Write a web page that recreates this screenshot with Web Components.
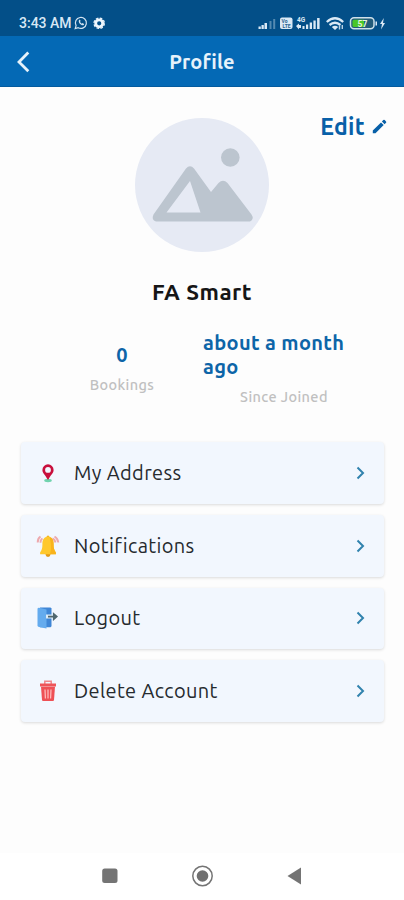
<!DOCTYPE html>
<html lang="en">
<head>
<meta charset="utf-8">
<meta name="viewport" content="width=device-width, initial-scale=1">
<title>Profile</title>
<style>
  body {
    margin: 0;
    background: #fdfdfd;
    font-family: Ubuntu, "Noto Sans", sans-serif;
  }
</style>
</head>
<body>
<profile-page></profile-page>

<script>
class StatusBar extends HTMLElement {
  constructor() {
    super();
    this.attachShadow({ mode: "open" });
  }

  connectedCallback() {
    this.shadowRoot.innerHTML = `
      <style>
        :host {
          display: flex;
          box-sizing: border-box;
          height: 36px;
          padding: 10px 17px 0 19px;
          background: #034f88;
          color: #d9e8f5;
          font: 500 14px/27px Roboto, sans-serif;
        }
        .time { width: 54px; white-space: nowrap; }
        svg { display: block; height: 26px; }
        .spacer { flex: 1; }
      </style>
      <span class="time">3:43 AM</span>
      <svg width="34" height="26" viewBox="0 0 34 26" fill="none" stroke="#d3e4f2">
        <path d="M2.2 18.6l.9-3a5.5 5.5 0 1 1 2.1 2.1z" stroke-width="1.2"/>
        <path d="M5.8 10.5c-.5 2.6 2.6 5.6 5 4.6l.3-1.2-1.6-.8-.8.6-1.7-1.8.6-.8-.7-1.5z" fill="#d3e4f2" stroke="none"/>
        <circle cx="26.2" cy="13.3" r="3.5" stroke="#eef6fc" stroke-width="2.8"/>
        <circle cx="26.2" cy="13.3" r="5.2" stroke="#eef6fc" stroke-width="1.2" stroke-dasharray="2.6 1.48"/>
      </svg>
      <span class="spacer"></span>
      <svg width="129" height="26" viewBox="0 0 129 26" fill="#dbe9f5">
        <path d="M.5 16.500h2.300V19H.5zM3.500 15h2.300v4H3.500zM6.500 13h2.500v6H6.500z"/>
        <path d="M11.500 11h2v8h-2zM15.200 9h2v10h-2z" opacity=".38"/>
        <rect x="22" y="7.500" width="12.500" height="11.500" rx="2"/>
        <g font-family="Roboto, sans-serif" font-weight="700">
          <text x="23.600" y="12.800" font-size="5" fill="#296491">Vo</text>
          <text x="24.500" y="17.800" font-size="5" fill="#296491">LTE</text>
          <text x="39" y="12" font-size="6.500">4G</text>
        </g>
        <path d="M38 16l3-2.500v1.500h2v3h-2v1.500zM44.500 16h2v3h-2zM48 14.500h2.200V19H48zM51.700 12.500h2.300V19h-2.300zM55.400 10.500h2.300V19h-2.300zM59.100 8h2.500v11h-2.500z"/>
        <path d="M68.800 12q8.200-7.500 16.400 0M71.500 15q5.500-4.500 11 0" fill="none" stroke="#dbe9f5" stroke-width="2.300"/>
        <path d="M73.800 17q3.200-2.500 6.400 0L77 20z"/>
        <path d="M81.500 19.500v-4M84.300 15v4" stroke="#b8d1e4" stroke-width="1.400"/>
        <rect x="92.500" y="7.800" width="23.500" height="11" rx="3.500" fill="#235b7a" stroke="#cfe1ea" stroke-width="1.500"/>
        <path d="M96 9.700h10v7.200H96a1.500 1.500 0 0 1-1.500-1.500v-4.200A1.500 1.500 0 0 1 96 9.700z" fill="#49c728"/>
        <text x="99.500" y="16.500" font-family="Roboto, sans-serif" font-weight="700" font-size="8.500" fill="#e5f3dd">57</text>
        <path d="M117.500 11.500h1.500v4h-1.500zM125.800 8l-3.800 6h2l-1 5.500 4-6.500h-2z"/>
      </svg>
    `;
  }
}

class AppHeader extends HTMLElement {
  constructor() {
    super();
    this.attachShadow({ mode: "open" });
  }

  connectedCallback() {
    this.shadowRoot.innerHTML = `
      <style>
        :host {
          display: grid;
          grid-template-columns: 1fr auto 1fr;
          align-items: center;
          box-sizing: border-box;
          height: 51px;
          padding: 1px 16px 0;
          background: #0469b5;
          border-bottom: 1px solid #045b9e;
          color: #e6f2fb;
        }
        h1 { margin: 0; font-size: 20px; line-height: 28px; font-weight: 600; letter-spacing: 0.15px; }
        svg { display: block; }
      </style>
      <svg width="14" height="22" viewBox="0 0 14 22" fill="none" stroke="#e6f2fb" stroke-width="2.8">
        <path d="M12.300 1.500L3 11l9.300 9.300"/>
      </svg>
      <h1><slot></slot></h1>
    `;
  }
}

class ProfileCard extends HTMLElement {
  constructor() {
    super();
    this.attachShadow({ mode: "open" });
  }

  connectedCallback() {
    this.shadowRoot.innerHTML = `
      <style>
        :host { display: block; padding-top: 31px; }
        .top {
          display: grid;
          grid-template-columns: 1fr 134px 1fr;
          align-items: start;
        }
        .avatar { grid-column: 2; display: block; }
        .edit {
          display: flex;
          justify-content: flex-end;
          align-items: center;
          gap: 7px;
          height: 16px;
          padding-right: 17px;
          color: #0860a8;
          font-size: 23px;
          font-weight: 600;
          letter-spacing: 0.3px;
        }
        h2 {
          margin: 24px 0 0;
          text-align: center;
          font-size: 22.5px;
          line-height: 32px;
          font-weight: 600;
          letter-spacing: 0.5px;
          color: #161616;
        }
      </style>
      <div class="top">
        <svg class="avatar" width="134" height="134" viewBox="0 0 134 134">
          <circle cx="67" cy="67" r="67" fill="#e6eaf4"/>
          <g fill="#bcc5cf">
            <circle cx="95.300" cy="39.500" r="9.300"/>
            <path fill-rule="evenodd" d="M51 50.500Q55 46 59 50.500L76 74L83.500 65Q88 60.500 92.500 65L116.500 96.500Q119.500 101 115 103.500H21Q16 102 18.500 96.500ZM55 63L31.500 94.500H65.500Z"/>
          </g>
        </svg>
        <div class="edit">
          <span>Edit</span>
          <svg width="15" height="15" viewBox="0 0 15 15" fill="#0860a8">
            <path d="M.8 11.600L9 3.400l2.700 2.700-8.200 8.200H.8zM9.900 2.500l1.400-1.400q.7-.7 1.400 0l1.300 1.300q.7.700 0 1.400l-1.400 1.400z"/>
          </svg>
        </div>
      </div>
      <h2><slot></slot></h2>
    `;
  }
}

class ProfileStat extends HTMLElement {
  constructor() {
    super();
    this.attachShadow({ mode: "open" });
  }

  connectedCallback() {
    this.shadowRoot.innerHTML = `
      <style>
        :host { display: flex; flex-direction: column; align-items: center; gap: 8px; }
        .value { font-size: 20px; line-height: 24px; font-weight: 600; color: #0d65a8; letter-spacing: 0.35px; }
        .label { font-size: 14.5px; line-height: 20px; font-weight: 500; color: #c0c0c0; letter-spacing: 0.4px; }
      </style>
      <div class="value"><slot></slot></div>
      <div class="label">${this.getAttribute("label") || ""}</div>
    `;
  }
}

class MenuItem extends HTMLElement {
  constructor() {
    super();
    this.attachShadow({ mode: "open" });
  }

  connectedCallback() {
    this.shadowRoot.innerHTML = `
      <style>
        :host {
          display: flex;
          align-items: center;
          box-sizing: border-box;
          height: 61.7px;
          padding: 0 19px 0 15px;
          border-radius: 4px;
          background: #f2f7fe;
          box-shadow: 0 1px 3px rgba(0, 0, 0, 0.14);
          color: #262a2e;
        }
        .label {
          flex: 1;
          margin-left: 14px;
          font-size: 20px;
          line-height: 28px;
          letter-spacing: 0.36px;
          white-space: nowrap;
        }
        .chevron { display: block; }
        ::slotted(svg) { display: block; flex: none; }
      </style>
      <slot name="icon"></slot>
      <span class="label"><slot></slot></span>
      <svg class="chevron" width="9" height="14" viewBox="0 0 9 14" fill="none" stroke="#3183ae" stroke-width="2">
        <path d="M1.500 1.500L7 7l-5.500 5.500"/>
      </svg>
    `;
  }
}

class NavBar extends HTMLElement {
  constructor() {
    super();
    this.attachShadow({ mode: "open" });
  }

  connectedCallback() {
    this.shadowRoot.innerHTML = `
      <style>
        :host {
          display: flex;
          justify-content: space-between;
          align-items: center;
          box-sizing: border-box;
          height: 47px;
          padding: 0 102px 1px 101px;
          background: #fff;
        }
      </style>
      <svg width="18" height="22" viewBox="0 0 18 22"><rect x="1.200" y="3.500" width="15.300" height="14.500" rx="2.500" fill="#747474"/></svg>
      <svg width="22" height="22" viewBox="0 0 22 22">
        <circle cx="10.500" cy="11" r="9.700" fill="none" stroke="#747474" stroke-width="1.500"/>
        <circle cx="10.500" cy="11" r="5.800" fill="#707070"/>
      </svg>
      <svg width="16" height="22" viewBox="0 0 16 22"><path d="M15 2.500v17L1.500 11z" fill="#747474"/></svg>
    `;
  }
}

class ProfilePage extends HTMLElement {
  constructor() {
    super();
    this.attachShadow({ mode: "open" });
  }

  connectedCallback() {
    this.shadowRoot.innerHTML = `
      <style>
        :host { display: flex; flex-direction: column; height: 900px; }
        main { flex: 1; }
        .stats {
          display: grid;
          grid-template-columns: 162px 162px;
          align-items: center;
          margin: 23px 0 0 41px;
        }
        .menu { display: flex; flex-direction: column; gap: 11px; margin: 35.2px 20px 0 21px; }
      </style>
      <status-bar></status-bar>
      <app-header>Profile</app-header>
      <main>
        <profile-card>FA Smart</profile-card>
        <div class="stats">
          <profile-stat label="Bookings">0</profile-stat>
          <profile-stat label="Since Joined">about a month ago</profile-stat>
        </div>
        <div class="menu">
          <menu-item>
            <svg slot="icon" width="24" height="24" viewBox="0 0 24 24">
              <ellipse cx="12" cy="19.500" rx="3.800" ry="1.700" fill="#70d3ae"/>
              <path fill="#c80f3c" fill-rule="evenodd" d="M12 3.300a5.600 5.600 0 0 1 5.600 5.600c0 3.200-3 4.600-5.200 9.600h-.8c-2.200-5-5.200-6.400-5.200-9.600A5.600 5.600 0 0 1 12 3.300zm0 2.700a2.900 2.900 0 1 0 0 5.800 2.900 2.900 0 0 0 0-5.800z"/>
            </svg>
            My Address
          </menu-item>
          <menu-item>
            <svg slot="icon" width="24" height="24" viewBox="0 0 24 24">
              <g fill="none" stroke="#eda9ad" stroke-width="1.900">
                <path d="M4.500 2.500Q1.500 4.500 1.700 8.500M6.500 4.500Q4.500 5.500 4.500 8.800M18.500 2.500q3.500 2 3.800 6M16.500 4.500q2.500 1 3 4"/>
              </g>
              <circle cx="12" cy="20.500" r="2.400" fill="#e39b17"/>
              <circle cx="12" cy="3" r="1.500" fill="#f2b31f"/>
              <path d="M12 2.700c4.300 0 5.600 3.200 5.600 7.500 0 4 .6 6 2.300 8.200v1.800H4.100v-1.800c1.700-2.200 2.300-4.200 2.300-8.200 0-4.300 1.300-7.500 5.600-7.500z" fill="#ffc82c"/>
              <path d="M13.500 3c3.200.8 4.100 3.500 4.100 7.200 0 4 .6 6 2.300 8.200v1.800H14c1.300-4 1.300-11-.5-17.200z" fill="#f9b31c"/>
            </svg>
            Notifications
          </menu-item>
          <menu-item>
            <svg slot="icon" width="24" height="24" viewBox="0 0 24 24">
              <path d="M4 1.500h10.500l1 1v17.700l-1 1H4z" fill="#3f86d6"/>
              <path d="M1.500 3Q1.500 1.600 3 1.700l7.500 1.700v19.200L3 21.100q-1.500-.4-1.500-1.600z" fill="#64abee"/>
              <path d="M10 8.500h6V6l6 4.600-6 4.600v-2.600h-6z" fill="#dcebf8"/>
              <path d="M12 9.700h5V6.200l5 4.400-5 4.400v-3.400h-5z" fill="#50676e"/>
            </svg>
            Logout
          </menu-item>
          <menu-item>
            <svg slot="icon" width="24" height="24" viewBox="0 0 24 24">
              <path d="M8.800 5V2.200h6.400V5" fill="none" stroke="#ef868a" stroke-width="1.500"/>
              <path d="M4 4.500h16v3H4z" fill="#ee5458"/>
              <path d="M5 7.800h14L18 21q-.1 1-1.100 1H7.100Q6.100 22 6 21z" fill="#ee5055"/>
              <path d="M9 10.500l.4 9M12 10.500v9M15 10.500l-.4 9" stroke="#ffc0c0" stroke-width="1.200"/>
            </svg>
            Delete Account
          </menu-item>
        </div>
      </main>
      <nav-bar></nav-bar>
    `;
  }
}

customElements.define("status-bar", StatusBar);
customElements.define("app-header", AppHeader);
customElements.define("profile-card", ProfileCard);
customElements.define("profile-stat", ProfileStat);
customElements.define("menu-item", MenuItem);
customElements.define("nav-bar", NavBar);
customElements.define("profile-page", ProfilePage);
</script>
</body>
</html>
